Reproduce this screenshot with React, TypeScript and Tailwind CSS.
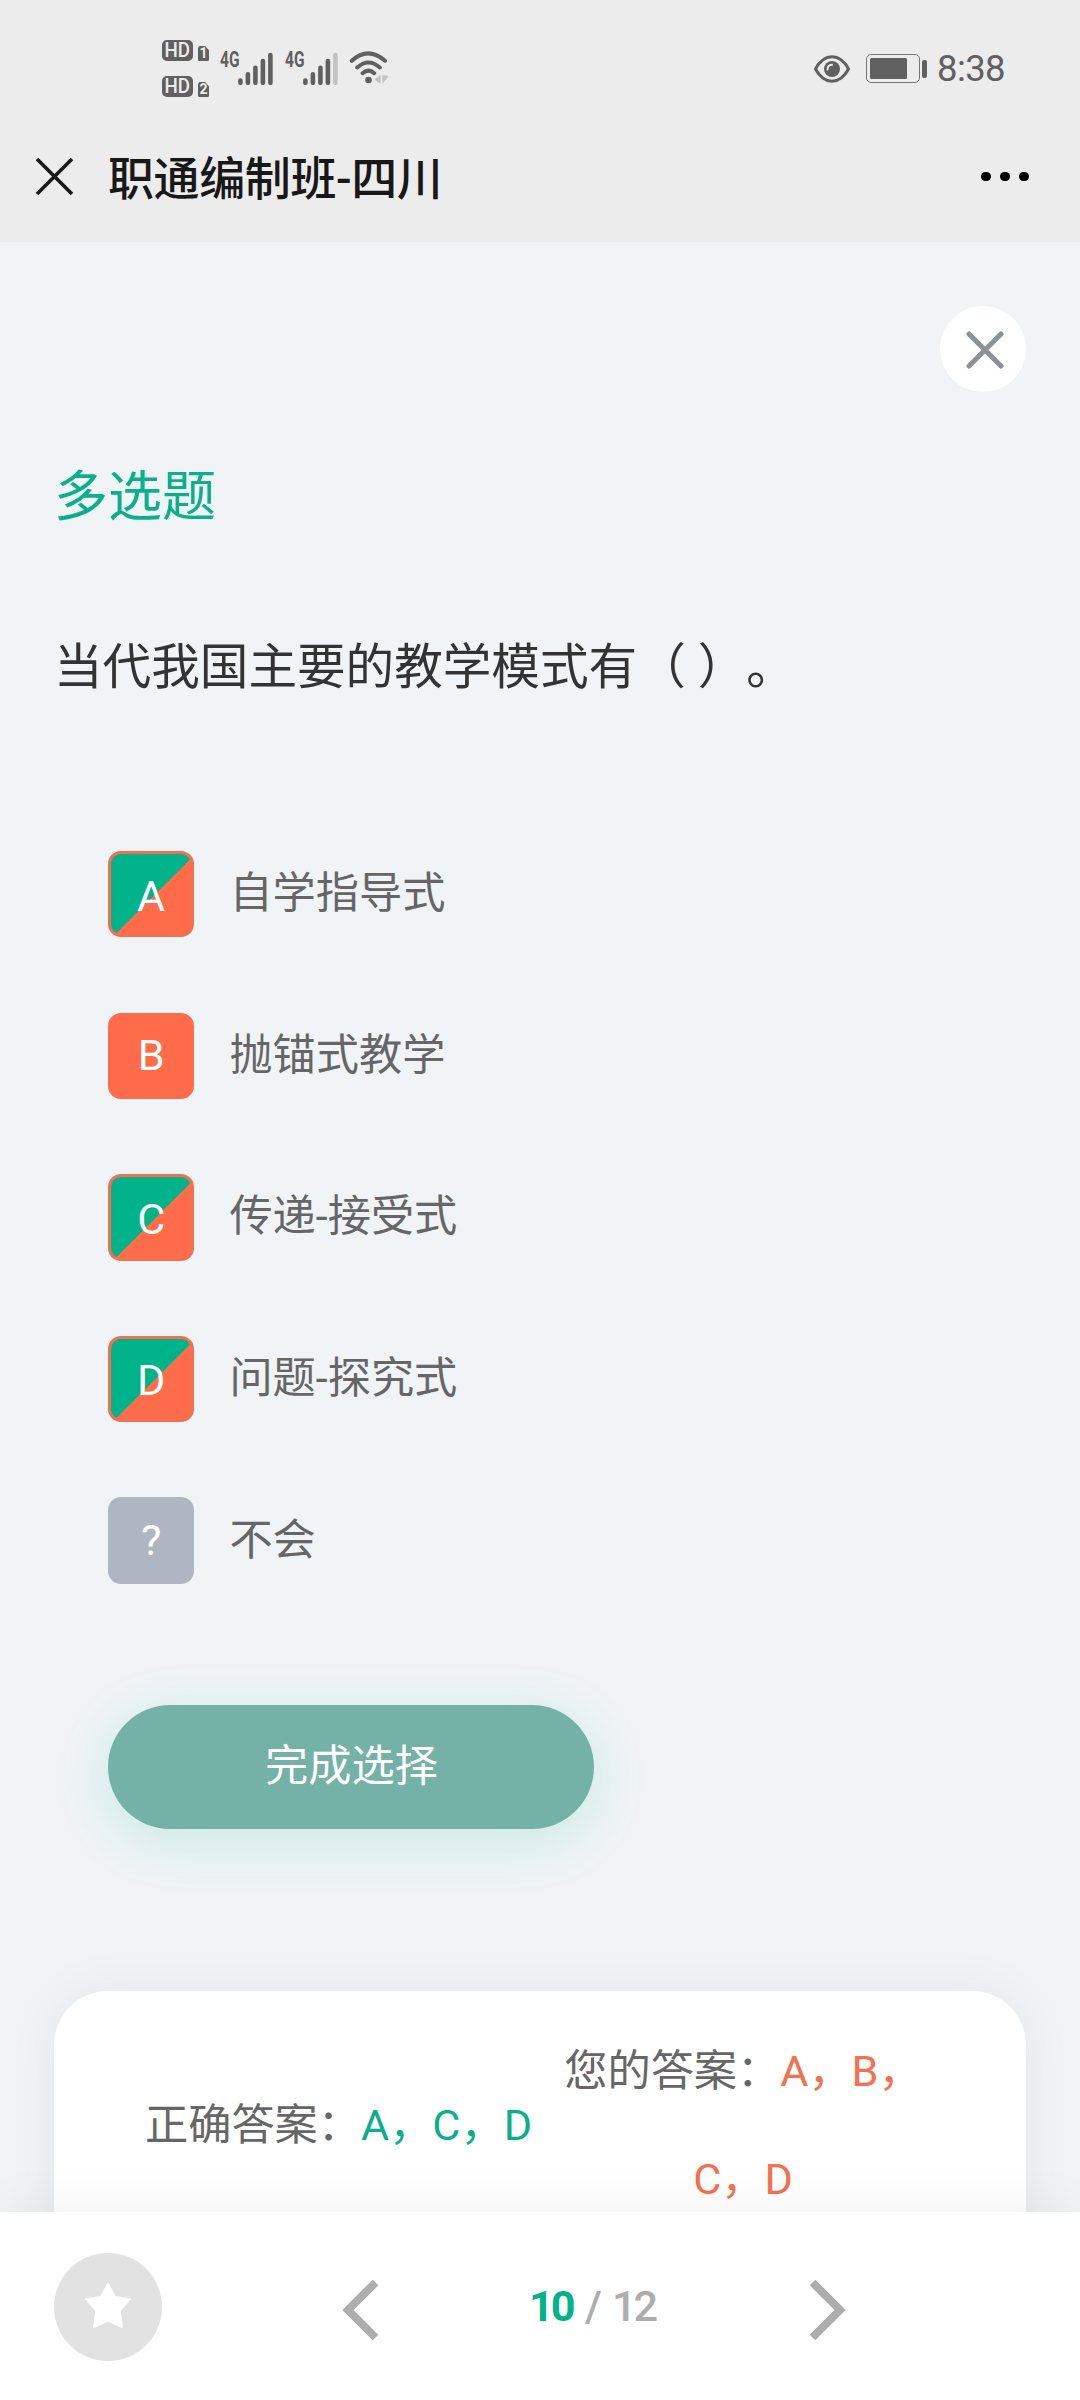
type Mark = "both" | "wrong" | "unsure";

const options: { key: string; label: string; mark: Mark }[] = [
  { key: "A", label: "自学指导式", mark: "both" },
  { key: "B", label: "抛锚式教学", mark: "wrong" },
  { key: "C", label: "传递-接受式", mark: "both" },
  { key: "D", label: "问题-探究式", mark: "both" },
  { key: "?", label: "不会", mark: "unsure" },
];

const markStyles: Record<Mark, string> = {
  both: "border-[3px] border-[#f07050] bg-[linear-gradient(135deg,#00b38b_53%,#ff6c4a_53%)] pt-[5px]",
  wrong: "bg-[#ff6c4a]",
  unsure: "bg-[#aeb6c2]",
};

function HdBadge({ sim }: { sim: string }) {
  return (
    <div className="flex h-[21px] items-end gap-[5px]">
      <span className="flex h-[21px] w-[31px] items-center justify-center rounded-[5px] bg-[#606060] text-[19.5px] leading-[21px] font-medium text-[#ececec]">
        <span className="inline-block scale-x-[0.96]">HD</span>
      </span>
      <span className="flex h-[15px] w-[11px] items-center justify-center rounded-[1.5px] bg-[#606060] text-[14px] leading-[15px] font-bold text-[#ececec] [clip-path:polygon(0_12%,12%_0,64%_0,100%_28%,100%_100%,0_100%)]">
        {sim}
      </span>
    </div>
  );
}

function Signal({ full }: { full?: boolean }) {
  return (
    <div className="flex h-[33px] w-[53px] items-start">
      <span className="w-[18px] shrink-0 origin-left scale-x-[0.72] text-[21.5px] leading-[15px] font-bold text-[#606060]">
        4G
      </span>
      <svg width="35" height="33" viewBox="0 0 35 33" className="shrink-0" strokeWidth="4.6" strokeLinecap="round" stroke="#606060">
        <path d="M2.4 28.6v2.2M9.9 22.4v8.4M17.4 15.8v15M24.9 9v21.8" />
        <path d="M32.4 3v27.8" stroke={full ? "#606060" : "#c2c2c2"} />
      </svg>
    </div>
  );
}

function StatusBar() {
  return (
    <div className="flex h-[136px] items-center justify-between pl-[162px] pr-[75px]">
      <div className="flex items-center">
        <div className="flex flex-col gap-[15px] pt-px">
          <HdBadge sim="1" />
          <HdBadge sim="2" />
        </div>
        <div className="ml-[11px] flex gap-[12px]">
          <Signal full />
          <Signal />
        </div>
        <svg width="42" height="34" viewBox="0 0 42 34" fill="none" stroke="#606060" strokeWidth="4" strokeLinecap="round" className="ml-[10px]">
          <path d="M3.8 9.8Q20 -5 37 9.8M9.2 16.5Q20.5 6.5 31.8 16.5M14.6 22.2Q20.5 17 26.2 22.2" />
          <circle cx="20.5" cy="29" r="3.3" fill="#606060" stroke="none" />
          <path d="M32.5 24v9l-6 -4.5ZM34.5 24v9l6 -8Z" fill="#c2c2c2" stroke="none" />
        </svg>
      </div>
      <div className="flex items-center">
        <svg width="36" height="28" viewBox="0 0 36 28" fill="none" className="mt-px">
          <path d="M1.5 14Q8 1.8 18 1.8T34.5 14Q28 26.2 18 26.2T1.5 14Z" stroke="#606060" strokeWidth="3" />
          <circle cx="18" cy="14" r="8" fill="#606060" />
          <path d="M13.5 14.5q0 -4.5 4.5 -4.8" stroke="#ececec" strokeWidth="2" strokeLinecap="round" />
        </svg>
        <div className="ml-[16px] mt-px h-[29px] w-[54px] rounded-[5px] border-[1.5px] border-[#777] p-[3px]">
          <div className="h-full w-[37px] rounded-[1.5px] bg-[#606060]" />
        </div>
        <div className="ml-[2px] mt-px h-[18px] w-[5px] rounded-[2px] bg-[#606060]" />
        <span className="ml-[10px] w-[68px] pt-[2px] text-[36.5px] leading-[40px] tracking-[-0.6px] text-[#606060]">8:38</span>
      </div>
    </div>
  );
}

function TitleBar() {
  return (
    <header className="flex h-[106px] items-center justify-between pb-6 pl-[35px] pr-[51px]">
      <div className="flex items-center">
        <svg width="39" height="39" viewBox="0 0 39 39" stroke="#181818" strokeWidth="3.6" className="-mt-px">
          <path d="M2 2L37 37M37 2L2 37" />
        </svg>
        <h1 className="ml-[34px] pt-[3px] text-[46px] leading-[60px] font-medium tracking-[-0.4px] text-[#181818]">职通编制班-四川</h1>
      </div>
      <div className="-mt-px flex gap-[9.5px]">
        <span className="size-[9.6px] rounded-full bg-black" />
        <span className="size-[9.6px] rounded-full bg-black" />
        <span className="size-[9.6px] rounded-full bg-black" />
      </div>
    </header>
  );
}

function BottomNav() {
  return (
    <nav className="relative flex h-[188px] shrink-0 items-center bg-white pt-[2px] pl-[54px] shadow-[0_0_54px_rgba(0,0,0,0.06)]">
      <button className="flex size-[108px] items-center justify-center rounded-full bg-[#e2e2e2]">
        <svg width="46" height="46" viewBox="0 0 46 46" fill="#fff" stroke="#fff" strokeWidth="2" strokeLinejoin="round" className="-mt-[4px]">
          <path d="M23 2L30 15L45 17.2L34.8 28.5L37 45L23 38.5L9 45L11.2 28.500L1 17.200L16 15Z" />
        </svg>
      </button>
      <svg width="37" height="62" viewBox="0 0 37 62" fill="none" stroke="#adadad" strokeWidth="8" className="ml-[180px] mt-[6px]">
        <path d="M33.5 3.5L6 31L33.5 58.5" />
      </svg>
      <div className="ml-[150px] flex w-[128px] text-[43.2px] leading-[50px] font-medium text-[#adadad]">
        <span className="w-[56px] font-bold tracking-[-3px] text-[#00b38b]">10</span>
        <span className="w-[27px]">/</span>
        <span className="tracking-[-3px]">12</span>
      </div>
      <svg width="37" height="62" viewBox="0 0 37 62" fill="none" stroke="#adadad" strokeWidth="8" className="ml-[152px] mt-[6px]">
        <path d="M3.5 3.5L31 31L3.5 58.5" />
      </svg>
    </nav>
  );
}

export default function App() {
  return (
    <div className="flex h-[2400px] w-[1080px] flex-col overflow-hidden bg-[#f0f4f7] font-['Roboto','Noto_Sans_CJK_SC',sans-serif] [text-spacing-trim:space-all]">
      <div className="h-[242px] shrink-0 bg-[#ececec]">
        <StatusBar />
        <TitleBar />
      </div>

      <main className="flex h-[1970px] shrink-0 flex-col overflow-hidden px-[54px] pt-[64px]">
        <button className="flex size-[86px] shrink-0 items-center justify-center self-end rounded-full bg-white">
          <svg width="38" height="38" viewBox="0 0 38 38" stroke="#8a9297" strokeWidth="5" strokeLinecap="round" className="ml-[4px] mt-[2px]">
            <path d="M3 3L35 35M35 3L3 35" />
          </svg>
        </button>

        <h2 className="mt-[66px] text-[54px] leading-[80px] text-[#0bb08a]">多选题</h2>
        <p className="mt-[90px] text-[48.6px] leading-[80px] text-[#333]">当代我国主要的教学模式有（ ）。</p>

        <ul className="mt-[143px] flex flex-col gap-[75.2px] pl-[54px]">
          {options.map((option) => (
            <li key={option.key} className="flex h-[86.4px] items-center gap-[35px] text-[43.2px] leading-[60px]">
              <span className={`flex size-[86.4px] items-center justify-center rounded-[13px] text-white ${markStyles[option.mark]}`}>
                {option.key}
              </span>
              <span className="text-[#666]">{option.label}</span>
            </li>
          ))}
        </ul>

        <button className="ml-[54px] mt-[121px] h-[124px] w-[486px] shrink-0 rounded-full bg-[#74b2a8] pl-px text-[43.2px] leading-[60px] text-white shadow-[0_11px_54px_rgba(0,179,139,0.17)]">
          完成选择
        </button>

        <section className="mt-[162px] flex h-[300px] shrink-0 items-start rounded-[54px] bg-white pl-[91px] pt-[27px] text-center text-[43.2px] leading-[108px] text-[#666] shadow-[0_0_54px_rgba(0,0,0,0.06)]">
          <p className="w-[387px] whitespace-nowrap pt-[54px]">
            正确答案：<span className="text-[#0bb08a]">A，C，D</span>
          </p>
          <p className="ml-[21px] w-[380px] whitespace-nowrap">
            您的答案：
            <span className="text-[#f5704f]">
              A，B，
              <br />
              C，D
            </span>
          </p>
        </section>
      </main>

      <BottomNav />
    </div>
  );
}
